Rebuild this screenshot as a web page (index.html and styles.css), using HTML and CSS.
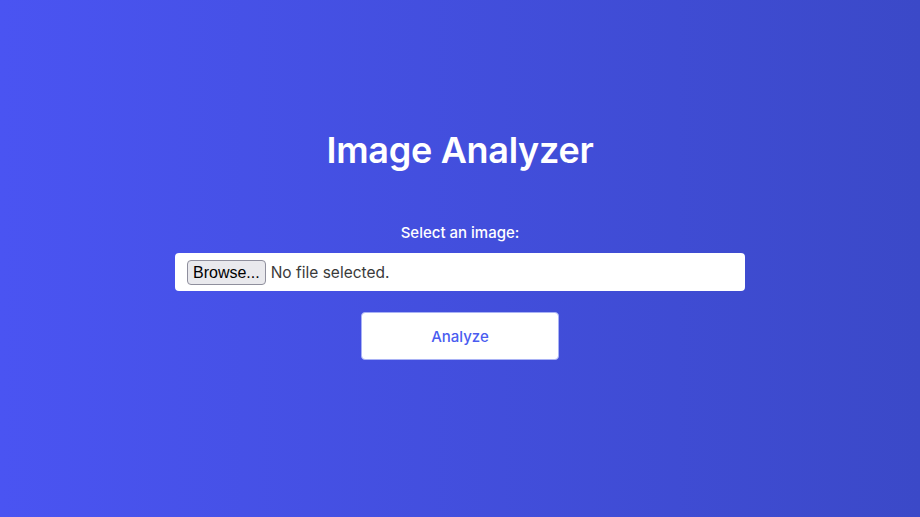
FILE: index.html
```html
<!DOCTYPE html>
<html lang="en">
<head>
<meta charset="utf-8">
<title>Image Analyzer</title>
<link rel="stylesheet" href="styles.css">
</head>
<body>
<main class="page">
  <section class="panel">
    <h1 class="title">Image Analyzer</h1>
    <form class="form">
      <label class="label" for="file">Select an image:</label>
      <div class="file-field">
        <span class="browse">Browse...</span>
        <span class="file-status">No file selected.</span>
      </div>
      <button type="button" class="analyze">Analyze</button>
    </form>
  </section>
</main>
</body>
</html>
```
FILE: styles.css
```css
* { box-sizing: border-box; }
html, body { margin: 0; height: 100%; }
body {
  font-family: Inter, "Noto Sans", sans-serif;
  background: linear-gradient(to right, #4a54f2, #3b49c8);
  color: #fff;
}
.page {
  min-height: 100%;
  display: flex;
  justify-content: center;
  padding-top: 126px;
}
.panel {
  width: 570px;
  display: flex;
  flex-direction: column;
  align-items: center;
}
.title {
  margin: 0;
  font-size: 36px;
  font-weight: 600;
  line-height: 48px;
  letter-spacing: -0.3px;
}
.form {
  width: 100%;
  display: flex;
  flex-direction: column;
  align-items: center;
  margin-top: 49px;
}
.label {
  font-size: 15px;
  font-weight: 500;
  line-height: 20px;
}
.file-field {
  width: 100%;
  height: 38px;
  margin-top: 10px;
  background: #fff;
  border-radius: 4px;
  display: flex;
  align-items: center;
  padding: 0 12px;
  gap: 5px;
  color: #333;
  font-size: 15.5px;
}
.browse {
  font-family: "Liberation Sans", Arial, sans-serif;
  font-size: 16px;
  color: #000;
  background: #e9e9ed;
  border: 1px solid #8f8f9d;
  border-radius: 4px;
  padding: 3px 5px 2px;
  line-height: 18px;
}
.file-status {
  color: #3a3a3a;
}
.analyze {
  margin-top: 21px;
  width: 198px;
  height: 48px;
  background: #fff;
  border: 1px solid #a9b2f5;
  border-radius: 4px;
  font-family: inherit;
  font-size: 15px;
  font-weight: 500;
  color: #4a5cf0;
  cursor: pointer;
}
```
